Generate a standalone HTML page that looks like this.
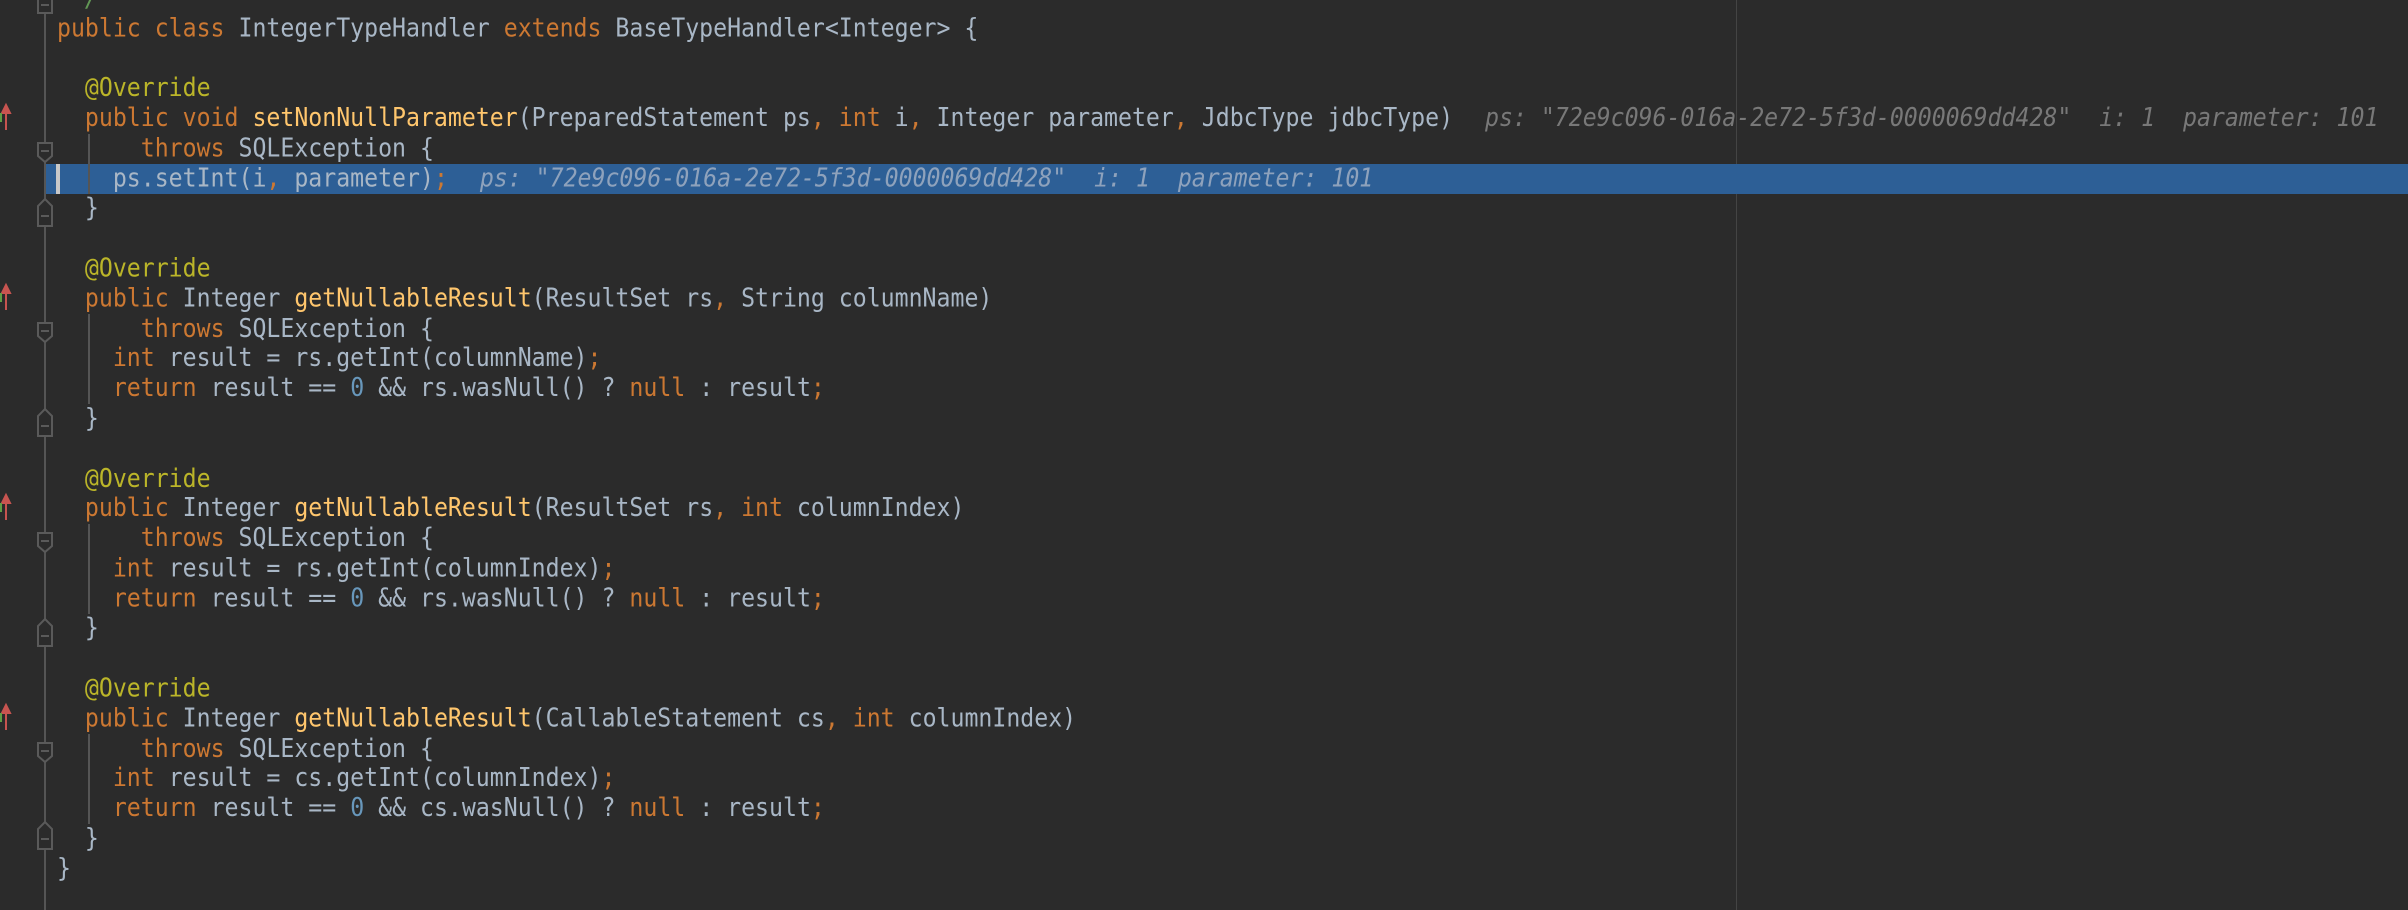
<!DOCTYPE html>
<html><head><meta charset="utf-8"><style>
html,body{margin:0;padding:0;background:#2b2b2b;width:2408px;height:910px;overflow:hidden}
#c{position:absolute;left:0;top:0;width:2408px;height:910px}
pre{position:absolute;left:57px;top:-16px;margin:0;font-family:"DejaVu Sans Mono","Liberation Mono",monospace;font-size:23.2px;line-height:26.786px;color:#a9b7c6;white-space:pre;transform:scaleY(1.12);transform-origin:0 0}
.k{color:#cc7832}.m{color:#ffc66d}.a{color:#bbb529}.n{color:#6897bb}.c{color:#629755;font-style:italic}
.h{color:#787878;font-style:italic;padding-left:4px}
.hl .h{color:#8ea2bc}
#sel{position:absolute;left:46px;top:164px;width:2362px;height:30px;background:#2d5f96}
#bar{position:absolute;left:56px;top:164px;width:4px;height:30px;background:#c8c8c8}
#gl{position:absolute;left:44px;top:0;width:2px;height:910px;background:#555}
#rm{position:absolute;left:1736px;top:0;width:1px;height:910px;background:#444}
</style></head><body><div id="c">
<div id="rm"></div>
<div id="sel"></div>
<div id="gl"></div>
<div id="bar"></div>
<svg width="100" height="910" style="position:absolute;left:0;top:0">
<g stroke="#5a5a5a" stroke-width="2" fill="#2b2b2b">
<path d="M38 -10 V13 H52 V-10 Z"/><path d="M41 5 H49"/>
<path d="M38 143 H52 V156 L45 162 L38 156 Z"/><path d="M41 151 H49"/>
<path d="M38 226 V206 L45 199 L52 206 V226 Z"/><path d="M41 216 H49"/>
<path d="M38 323 H52 V336 L45 342 L38 336 Z"/><path d="M41 331 H49"/>
<path d="M38 436 V416 L45 409 L52 416 V436 Z"/><path d="M41 426 H49"/>
<path d="M38 533 H52 V546 L45 552 L38 546 Z"/><path d="M41 541 H49"/>
<path d="M38 646 V626 L45 619 L52 626 V646 Z"/><path d="M41 636 H49"/>
<path d="M38 743 H52 V756 L45 762 L38 756 Z"/><path d="M41 751 H49"/>
<path d="M38 849 V829 L45 822 L52 829 V849 Z"/><path d="M41 839 H49"/>
</g>
<g stroke="#555" stroke-width="2">
<path d="M89 134 V194"/><path d="M89 314 V404"/><path d="M89 524 V614"/><path d="M89 734 V824"/>
</g>
<g fill="#c75450" stroke="#c75450" stroke-width="2">
<path d="M6 111 V130" fill="none"/><path d="M2 113 L6 105 L10 113 Z"/>
<path d="M6 291 V310" fill="none"/><path d="M2 293 L6 285 L10 293 Z"/>
<path d="M6 501 V520" fill="none"/><path d="M2 503 L6 495 L10 503 Z"/>
<path d="M6 711 V730" fill="none"/><path d="M2 713 L6 705 L10 713 Z"/>
</g>
<g fill="#5e9e46"><rect x="0" y="113" width="2" height="9"/><rect x="0" y="293" width="2" height="9"/><rect x="0" y="503" width="2" height="9"/><rect x="0" y="713" width="2" height="9"/></g>
</svg>
<pre><span class="c"> */</span>
<span class="k">public class </span>IntegerTypeHandler <span class="k">extends </span>BaseTypeHandler&lt;Integer&gt; {

  <span class="a">@Override</span>
  <span class="k">public void </span><span class="m">setNonNullParameter</span>(PreparedStatement ps<span class="k">, int </span>i<span class="k">, </span>Integer parameter<span class="k">, </span>JdbcType jdbcType)  <span class="h">ps: "72e9c096-016a-2e72-5f3d-0000069dd428"  i: 1  parameter: 101</span>
      <span class="k">throws </span>SQLException {
<span class="hl">    ps.setInt(i<span class="k">, </span>parameter)<span class="k">;</span>  <span class="h">ps: "72e9c096-016a-2e72-5f3d-0000069dd428"  i: 1  parameter: 101</span></span>
  }

  <span class="a">@Override</span>
  <span class="k">public </span>Integer <span class="m">getNullableResult</span>(ResultSet rs<span class="k">, </span>String columnName)
      <span class="k">throws </span>SQLException {
    <span class="k">int </span>result = rs.getInt(columnName)<span class="k">;</span>
    <span class="k">return </span>result == <span class="n">0</span> &amp;&amp; rs.wasNull() ? <span class="k">null </span>: result<span class="k">;</span>
  }

  <span class="a">@Override</span>
  <span class="k">public </span>Integer <span class="m">getNullableResult</span>(ResultSet rs<span class="k">, int </span>columnIndex)
      <span class="k">throws </span>SQLException {
    <span class="k">int </span>result = rs.getInt(columnIndex)<span class="k">;</span>
    <span class="k">return </span>result == <span class="n">0</span> &amp;&amp; rs.wasNull() ? <span class="k">null </span>: result<span class="k">;</span>
  }

  <span class="a">@Override</span>
  <span class="k">public </span>Integer <span class="m">getNullableResult</span>(CallableStatement cs<span class="k">, int </span>columnIndex)
      <span class="k">throws </span>SQLException {
    <span class="k">int </span>result = cs.getInt(columnIndex)<span class="k">;</span>
    <span class="k">return </span>result == <span class="n">0</span> &amp;&amp; cs.wasNull() ? <span class="k">null </span>: result<span class="k">;</span>
  }
}
</pre>
</div></body></html>
